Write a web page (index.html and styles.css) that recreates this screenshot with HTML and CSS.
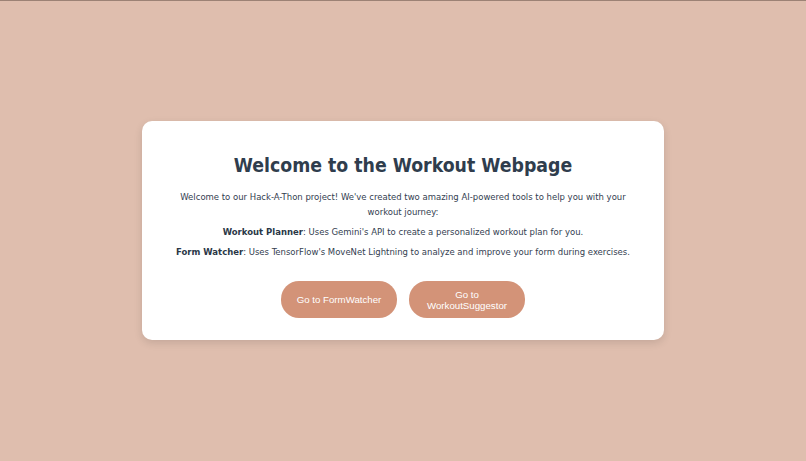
FILE: index.html
```html
<!DOCTYPE html>
<html>
<head>
<meta charset="utf-8">
<link rel="stylesheet" href="styles.css">
</head>
<body>
<div class="page">
  <div class="card">
    <h1 class="title">Welcome to the Workout Webpage</h1>
    <p class="intro">Welcome to our Hack-A-Thon project! We've created two amazing AI-powered tools to help you with your workout journey:</p>
    <p class="item"><strong>Workout Planner</strong>: Uses Gemini's API to create a personalized workout plan for you.</p>
    <p class="item"><strong>Form Watcher</strong>: Uses TensorFlow's MoveNet Lightning to analyze and improve your form during exercises.</p>
    <div class="actions">
      <button class="btn">Go to FormWatcher</button>
      <button class="btn">Go to WorkoutSuggestor</button>
    </div>
  </div>
</div>
</body>
</html>
```

FILE: styles.css
```css
html, body {
  margin: 0;
  padding: 0;
}
body {
  background: #dfbeae;
  border-top: 1px solid #9c8275;
  height: 460px;
  font-family: "DejaVu Sans Condensed", "DejaVu Sans", sans-serif;
  color: #2f3d4d;
}
.page {
  display: flex;
  justify-content: center;
  padding-top: 120px;
}
.card {
  width: 522px;
  box-sizing: border-box;
  height: 219px;
  background: #ffffff;
  border-radius: 10px;
  box-shadow: 0 3px 8px rgba(0, 0, 0, 0.12);
  padding: 33px 30px 0;
  text-align: center;
}
.title {
  margin: 0 0 11px;
  font-size: 19.3px;
  line-height: 24px;
  font-weight: bold;
  color: #2f3d4d;
}
.intro, .item {
  margin: 0 0 5px;
  font-size: 9.45px;
  line-height: 15px;
  color: #334050;
}
.item strong {
  color: #2a3747;
}
.actions {
  display: flex;
  justify-content: center;
  gap: 12px;
  margin-top: 22px;
}
.btn {
  width: 116px;
  height: 37px;
  border: none;
  border-radius: 18px;
  background: #d39378;
  color: #ffffff;
  font-family: "Liberation Sans", Arial, sans-serif;
  font-size: 9.7px;
  line-height: 11px;
  padding: 0 12px;
}
```
